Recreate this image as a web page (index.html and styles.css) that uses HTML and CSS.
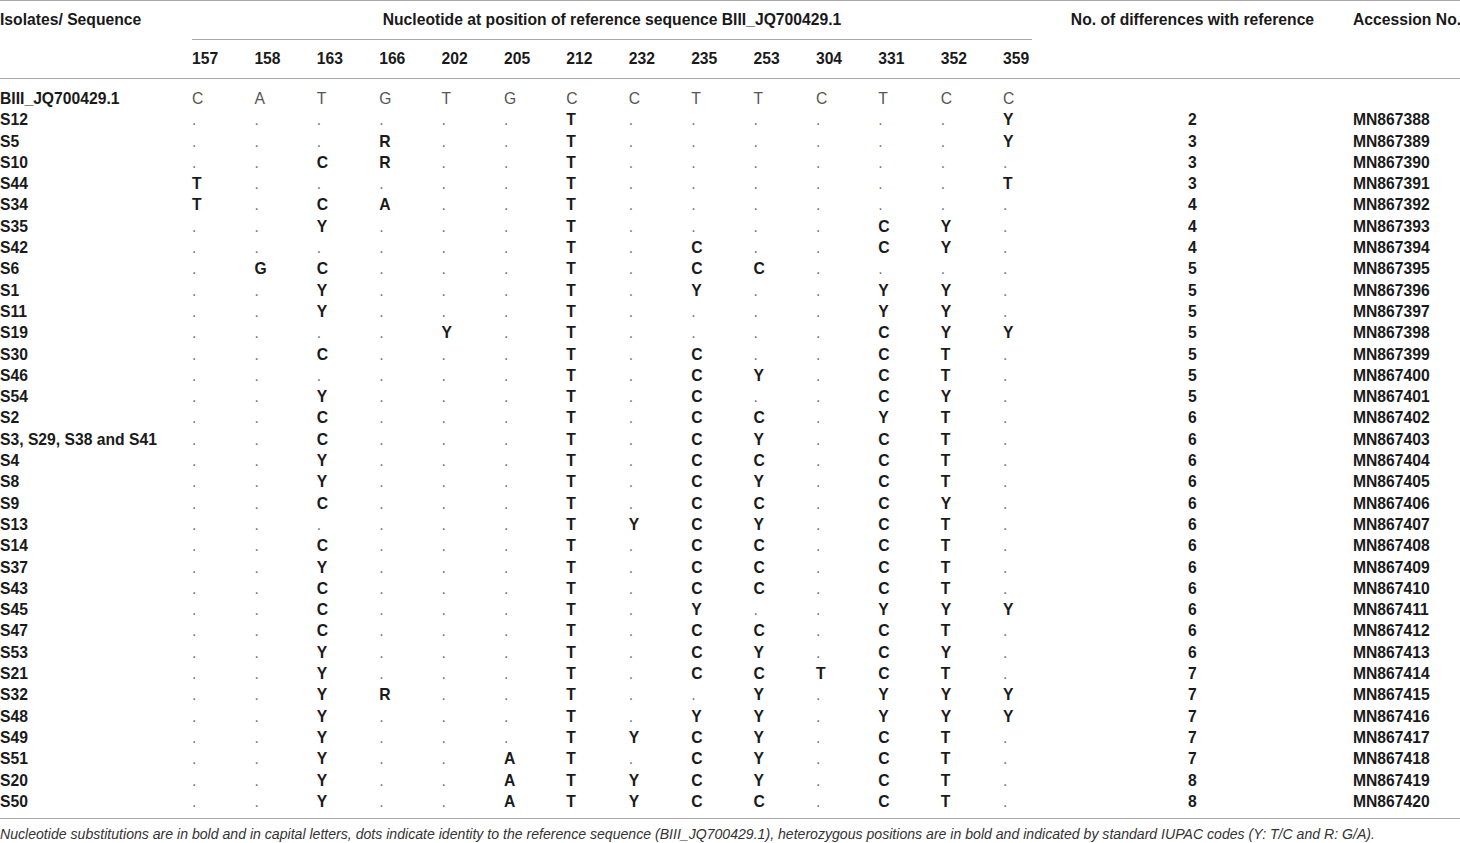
FILE: index.html
```html
<!DOCTYPE html>
<html lang="en">
<head>
<meta charset="utf-8">
<title>Nucleotide differences</title>
<link rel="stylesheet" href="styles.css">
</head>
<body>
<table class="tbl">
  <colgroup>
    <col class="c-lab">
    <col class="c-pos"><col class="c-pos"><col class="c-pos"><col class="c-pos"><col class="c-pos"><col class="c-pos"><col class="c-pos">
    <col class="c-pos"><col class="c-pos"><col class="c-pos"><col class="c-pos"><col class="c-pos"><col class="c-pos">
    <col class="c-last">
    <col class="c-diff">
    <col class="c-acc">
  </colgroup>
  <thead>
    <tr class="h1">
      <th class="lab" rowspan="2">Isolates/ Sequence</th>
      <th class="span" colspan="14">Nucleotide at position of reference sequence BIII_JQ700429.1</th>
      <th class="diff" rowspan="2">No. of differences with reference</th>
      <th class="acc" rowspan="2">Accession No.</th>
    </tr>
    <tr class="h2">
      <th>157</th><th>158</th><th>163</th><th>166</th><th>202</th><th>205</th><th>212</th><th>232</th><th>235</th><th>253</th><th>304</th><th>331</th><th>352</th><th>359</th>
    </tr>
  </thead>
  <tbody>
    <tr class="ref"><td class="lab">BIII_JQ700429.1</td><td>C</td><td>A</td><td>T</td><td>G</td><td>T</td><td>G</td><td>C</td><td>C</td><td>T</td><td>T</td><td>C</td><td>T</td><td>C</td><td>C</td><td class="diff"></td><td class="acc"></td></tr>
    <tr><td class="lab">S12</td><td>.</td><td>.</td><td>.</td><td>.</td><td>.</td><td>.</td><td class="b">T</td><td>.</td><td>.</td><td>.</td><td>.</td><td>.</td><td>.</td><td class="b">Y</td><td class="diff">2</td><td class="acc">MN867388</td></tr>
    <tr><td class="lab">S5</td><td>.</td><td>.</td><td>.</td><td class="b">R</td><td>.</td><td>.</td><td class="b">T</td><td>.</td><td>.</td><td>.</td><td>.</td><td>.</td><td>.</td><td class="b">Y</td><td class="diff">3</td><td class="acc">MN867389</td></tr>
    <tr><td class="lab">S10</td><td>.</td><td>.</td><td class="b">C</td><td class="b">R</td><td>.</td><td>.</td><td class="b">T</td><td>.</td><td>.</td><td>.</td><td>.</td><td>.</td><td>.</td><td>.</td><td class="diff">3</td><td class="acc">MN867390</td></tr>
    <tr><td class="lab">S44</td><td class="b">T</td><td>.</td><td>.</td><td>.</td><td>.</td><td>.</td><td class="b">T</td><td>.</td><td>.</td><td>.</td><td>.</td><td>.</td><td>.</td><td class="b">T</td><td class="diff">3</td><td class="acc">MN867391</td></tr>
    <tr><td class="lab">S34</td><td class="b">T</td><td>.</td><td class="b">C</td><td class="b">A</td><td>.</td><td>.</td><td class="b">T</td><td>.</td><td>.</td><td>.</td><td>.</td><td>.</td><td>.</td><td>.</td><td class="diff">4</td><td class="acc">MN867392</td></tr>
    <tr><td class="lab">S35</td><td>.</td><td>.</td><td class="b">Y</td><td>.</td><td>.</td><td>.</td><td class="b">T</td><td>.</td><td>.</td><td>.</td><td>.</td><td class="b">C</td><td class="b">Y</td><td>.</td><td class="diff">4</td><td class="acc">MN867393</td></tr>
    <tr><td class="lab">S42</td><td>.</td><td>.</td><td>.</td><td>.</td><td>.</td><td>.</td><td class="b">T</td><td>.</td><td class="b">C</td><td>.</td><td>.</td><td class="b">C</td><td class="b">Y</td><td>.</td><td class="diff">4</td><td class="acc">MN867394</td></tr>
    <tr><td class="lab">S6</td><td>.</td><td class="b">G</td><td class="b">C</td><td>.</td><td>.</td><td>.</td><td class="b">T</td><td>.</td><td class="b">C</td><td class="b">C</td><td>.</td><td>.</td><td>.</td><td>.</td><td class="diff">5</td><td class="acc">MN867395</td></tr>
    <tr><td class="lab">S1</td><td>.</td><td>.</td><td class="b">Y</td><td>.</td><td>.</td><td>.</td><td class="b">T</td><td>.</td><td class="b">Y</td><td>.</td><td>.</td><td class="b">Y</td><td class="b">Y</td><td>.</td><td class="diff">5</td><td class="acc">MN867396</td></tr>
    <tr><td class="lab">S11</td><td>.</td><td>.</td><td class="b">Y</td><td>.</td><td>.</td><td>.</td><td class="b">T</td><td>.</td><td>.</td><td>.</td><td>.</td><td class="b">Y</td><td class="b">Y</td><td>.</td><td class="diff">5</td><td class="acc">MN867397</td></tr>
    <tr><td class="lab">S19</td><td>.</td><td>.</td><td>.</td><td>.</td><td class="b">Y</td><td>.</td><td class="b">T</td><td>.</td><td>.</td><td>.</td><td>.</td><td class="b">C</td><td class="b">Y</td><td class="b">Y</td><td class="diff">5</td><td class="acc">MN867398</td></tr>
    <tr><td class="lab">S30</td><td>.</td><td>.</td><td class="b">C</td><td>.</td><td>.</td><td>.</td><td class="b">T</td><td>.</td><td class="b">C</td><td>.</td><td>.</td><td class="b">C</td><td class="b">T</td><td>.</td><td class="diff">5</td><td class="acc">MN867399</td></tr>
    <tr><td class="lab">S46</td><td>.</td><td>.</td><td>.</td><td>.</td><td>.</td><td>.</td><td class="b">T</td><td>.</td><td class="b">C</td><td class="b">Y</td><td>.</td><td class="b">C</td><td class="b">T</td><td>.</td><td class="diff">5</td><td class="acc">MN867400</td></tr>
    <tr><td class="lab">S54</td><td>.</td><td>.</td><td class="b">Y</td><td>.</td><td>.</td><td>.</td><td class="b">T</td><td>.</td><td class="b">C</td><td>.</td><td>.</td><td class="b">C</td><td class="b">Y</td><td>.</td><td class="diff">5</td><td class="acc">MN867401</td></tr>
    <tr><td class="lab">S2</td><td>.</td><td>.</td><td class="b">C</td><td>.</td><td>.</td><td>.</td><td class="b">T</td><td>.</td><td class="b">C</td><td class="b">C</td><td>.</td><td class="b">Y</td><td class="b">T</td><td>.</td><td class="diff">6</td><td class="acc">MN867402</td></tr>
    <tr><td class="lab">S3, S29, S38 and S41</td><td>.</td><td>.</td><td class="b">C</td><td>.</td><td>.</td><td>.</td><td class="b">T</td><td>.</td><td class="b">C</td><td class="b">Y</td><td>.</td><td class="b">C</td><td class="b">T</td><td>.</td><td class="diff">6</td><td class="acc">MN867403</td></tr>
    <tr><td class="lab">S4</td><td>.</td><td>.</td><td class="b">Y</td><td>.</td><td>.</td><td>.</td><td class="b">T</td><td>.</td><td class="b">C</td><td class="b">C</td><td>.</td><td class="b">C</td><td class="b">T</td><td>.</td><td class="diff">6</td><td class="acc">MN867404</td></tr>
    <tr><td class="lab">S8</td><td>.</td><td>.</td><td class="b">Y</td><td>.</td><td>.</td><td>.</td><td class="b">T</td><td>.</td><td class="b">C</td><td class="b">Y</td><td>.</td><td class="b">C</td><td class="b">T</td><td>.</td><td class="diff">6</td><td class="acc">MN867405</td></tr>
    <tr><td class="lab">S9</td><td>.</td><td>.</td><td class="b">C</td><td>.</td><td>.</td><td>.</td><td class="b">T</td><td>.</td><td class="b">C</td><td class="b">C</td><td>.</td><td class="b">C</td><td class="b">Y</td><td>.</td><td class="diff">6</td><td class="acc">MN867406</td></tr>
    <tr><td class="lab">S13</td><td>.</td><td>.</td><td>.</td><td>.</td><td>.</td><td>.</td><td class="b">T</td><td class="b">Y</td><td class="b">C</td><td class="b">Y</td><td>.</td><td class="b">C</td><td class="b">T</td><td>.</td><td class="diff">6</td><td class="acc">MN867407</td></tr>
    <tr><td class="lab">S14</td><td>.</td><td>.</td><td class="b">C</td><td>.</td><td>.</td><td>.</td><td class="b">T</td><td>.</td><td class="b">C</td><td class="b">C</td><td>.</td><td class="b">C</td><td class="b">T</td><td>.</td><td class="diff">6</td><td class="acc">MN867408</td></tr>
    <tr><td class="lab">S37</td><td>.</td><td>.</td><td class="b">Y</td><td>.</td><td>.</td><td>.</td><td class="b">T</td><td>.</td><td class="b">C</td><td class="b">C</td><td>.</td><td class="b">C</td><td class="b">T</td><td>.</td><td class="diff">6</td><td class="acc">MN867409</td></tr>
    <tr><td class="lab">S43</td><td>.</td><td>.</td><td class="b">C</td><td>.</td><td>.</td><td>.</td><td class="b">T</td><td>.</td><td class="b">C</td><td class="b">C</td><td>.</td><td class="b">C</td><td class="b">T</td><td>.</td><td class="diff">6</td><td class="acc">MN867410</td></tr>
    <tr><td class="lab">S45</td><td>.</td><td>.</td><td class="b">C</td><td>.</td><td>.</td><td>.</td><td class="b">T</td><td>.</td><td class="b">Y</td><td>.</td><td>.</td><td class="b">Y</td><td class="b">Y</td><td class="b">Y</td><td class="diff">6</td><td class="acc">MN867411</td></tr>
    <tr><td class="lab">S47</td><td>.</td><td>.</td><td class="b">C</td><td>.</td><td>.</td><td>.</td><td class="b">T</td><td>.</td><td class="b">C</td><td class="b">C</td><td>.</td><td class="b">C</td><td class="b">T</td><td>.</td><td class="diff">6</td><td class="acc">MN867412</td></tr>
    <tr><td class="lab">S53</td><td>.</td><td>.</td><td class="b">Y</td><td>.</td><td>.</td><td>.</td><td class="b">T</td><td>.</td><td class="b">C</td><td class="b">Y</td><td>.</td><td class="b">C</td><td class="b">Y</td><td>.</td><td class="diff">6</td><td class="acc">MN867413</td></tr>
    <tr><td class="lab">S21</td><td>.</td><td>.</td><td class="b">Y</td><td>.</td><td>.</td><td>.</td><td class="b">T</td><td>.</td><td class="b">C</td><td class="b">C</td><td class="b">T</td><td class="b">C</td><td class="b">T</td><td>.</td><td class="diff">7</td><td class="acc">MN867414</td></tr>
    <tr><td class="lab">S32</td><td>.</td><td>.</td><td class="b">Y</td><td class="b">R</td><td>.</td><td>.</td><td class="b">T</td><td>.</td><td>.</td><td class="b">Y</td><td>.</td><td class="b">Y</td><td class="b">Y</td><td class="b">Y</td><td class="diff">7</td><td class="acc">MN867415</td></tr>
    <tr><td class="lab">S48</td><td>.</td><td>.</td><td class="b">Y</td><td>.</td><td>.</td><td>.</td><td class="b">T</td><td>.</td><td class="b">Y</td><td class="b">Y</td><td>.</td><td class="b">Y</td><td class="b">Y</td><td class="b">Y</td><td class="diff">7</td><td class="acc">MN867416</td></tr>
    <tr><td class="lab">S49</td><td>.</td><td>.</td><td class="b">Y</td><td>.</td><td>.</td><td>.</td><td class="b">T</td><td class="b">Y</td><td class="b">C</td><td class="b">Y</td><td>.</td><td class="b">C</td><td class="b">T</td><td>.</td><td class="diff">7</td><td class="acc">MN867417</td></tr>
    <tr><td class="lab">S51</td><td>.</td><td>.</td><td class="b">Y</td><td>.</td><td>.</td><td class="b">A</td><td class="b">T</td><td>.</td><td class="b">C</td><td class="b">Y</td><td>.</td><td class="b">C</td><td class="b">T</td><td>.</td><td class="diff">7</td><td class="acc">MN867418</td></tr>
    <tr><td class="lab">S20</td><td>.</td><td>.</td><td class="b">Y</td><td>.</td><td>.</td><td class="b">A</td><td class="b">T</td><td class="b">Y</td><td class="b">C</td><td class="b">Y</td><td>.</td><td class="b">C</td><td class="b">T</td><td>.</td><td class="diff">8</td><td class="acc">MN867419</td></tr>
    <tr><td class="lab">S50</td><td>.</td><td>.</td><td class="b">Y</td><td>.</td><td>.</td><td class="b">A</td><td class="b">T</td><td class="b">Y</td><td class="b">C</td><td class="b">C</td><td>.</td><td class="b">C</td><td class="b">T</td><td>.</td><td class="diff">8</td><td class="acc">MN867420</td></tr>
  </tbody>
</table>
<p class="note">Nucleotide substitutions are in bold and in capital letters, dots indicate identity to the reference sequence (BIII_JQ700429.1), heterozygous positions are in bold and indicated by standard IUPAC codes (Y: T/C and R: G/A).</p>
</body>
</html>
```

FILE: styles.css
```css
html, body {
  margin: 0;
  padding: 0;
  background: #ffffff;
}

body {
  font-family: "Liberation Sans", Arial, Helvetica, sans-serif;
  color: #1a1a1a;
  overflow: hidden;
}

.tbl {
  border-collapse: collapse;
  table-layout: fixed;
  width: 1460px;
  font-size: 15.7px;
  border-top: 1px solid #a8a8a8;
}

.c-lab { width: 192px; }
.c-pos { width: 62.4px; }
.c-last { width: 28.8px; }
.c-diff { width: 321px; }
.c-acc { width: 107px; }

.tbl th,
.tbl td {
  padding: 0;
  text-align: left;
  white-space: nowrap;
  overflow: visible;
}

.tbl thead {
  border-bottom: 1px solid #a8a8a8;
}

.tbl thead th {
  font-weight: bold;
  color: #1a1a1a;
}

.tbl .h1 th {
  height: 38px;
  line-height: 38px;
  vertical-align: top;
}

.tbl .h1 th.span {
  text-align: center;
  border-bottom: 1px solid #a8a8a8;
}

.tbl .h2 th {
  height: 38px;
  line-height: 38px;
  vertical-align: middle;
}

.tbl th.diff,
.tbl td.diff {
  text-align: center;
}

.tbl tbody {
  border-bottom: 1px solid #a8a8a8;
}

.tbl tbody td {
  height: 21.3px;
  line-height: 21.3px;
  vertical-align: middle;
  color: #777777;
  font-weight: normal;
}

.tbl tbody tr:first-child td {
  padding-top: 9px;
}

.tbl tbody tr:last-child td {
  padding-bottom: 6px;
}

.tbl tbody td.lab,
.tbl tbody td.diff,
.tbl tbody td.acc,
.tbl tbody td.b {
  font-weight: bold;
  color: #1a1a1a;
}

.tbl tbody tr.ref td {
  color: #555555;
}

.tbl tbody tr.ref td.lab {
  color: #1a1a1a;
}

.note {
  margin: 5px 0 0;
  font-style: italic;
  font-size: 14.1px;
  line-height: 20px;
  color: #333333;
  white-space: nowrap;
}
```
